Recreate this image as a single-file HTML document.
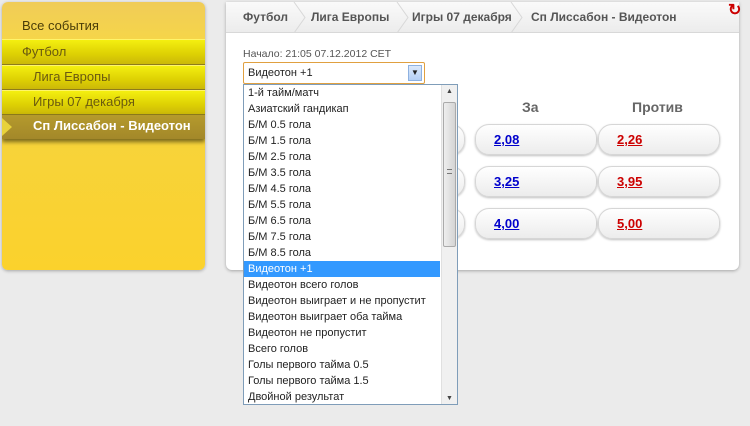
<!DOCTYPE html>
<html><head><meta charset="utf-8"><style>
*{margin:0;padding:0;box-sizing:border-box}
body{width:750px;height:426px;overflow:hidden;background:#ebebeb;font-family:"Liberation Sans",Arial,sans-serif;position:relative}
.side{position:absolute;left:2px;top:2px;width:203px;height:268px;border-radius:6px;background:linear-gradient(#f0cc58 0,#f6d648 40px,#f7d33a 140px,#fbd22c 268px);box-shadow:0 1px 3px rgba(0,0,0,.3);overflow:hidden}
.row{position:absolute;left:0;width:203px;font-size:13px;color:#6b5a10;line-height:22px}
.y{background:linear-gradient(#f4ef10,#ddd003 60%,#cbb808);border-bottom:1px solid #8d7b1c;border-top:1px solid #fff56a}
.sel{background:linear-gradient(#b59a2c,#a3882a);color:#fff;font-weight:bold;box-shadow:0 3px 4px rgba(0,0,0,.5)}
.panel{position:absolute;left:226px;top:2px;width:513px;height:268px;background:#fff;border-radius:0 0 6px 6px;box-shadow:0 1px 3px rgba(0,0,0,.3)}
.bc{height:31px;background:linear-gradient(#fafafa,#ececec);border-bottom:1px solid #d8d8d8;font-size:12px;font-weight:bold;color:#555;line-height:31px;position:relative}
.bc span{position:absolute;top:0}
.bc svg{position:absolute;top:0}
.btn{position:absolute;width:122px;height:31px;border:1px solid #d6d6d6;border-radius:14px;background:linear-gradient(#fff,#ececec);box-shadow:0 1px 2px rgba(0,0,0,.25);font-size:13px;font-weight:bold;line-height:29px;padding-left:18px}
.b{color:#0000cc;text-decoration:underline}.r{color:#cc0000;text-decoration:underline}
.list{position:absolute;left:243px;top:84px;width:215px;height:321px;border:1px solid #7f9db9;background:#fff;font-size:11px;color:#222}
.list .it{height:16px;line-height:16px;padding-left:4px;white-space:nowrap}
.list .s{background:#3399ff;color:#fff;width:196px}
.list .sb{position:absolute;right:0;top:0;width:16px;height:319px;background:#f0f0f0;border-left:1px solid #e0e0e0}
.list .th{position:absolute;left:1px;top:17px;width:13px;height:145px;background:linear-gradient(90deg,#eee,#d4d4d4);border:1px solid #aaa;border-radius:2px}
</style></head><body>
<div class="side">
<div class="row" style="top:13px;padding-left:20px;color:#4a3d08">Все события</div>
<div class="row y" style="top:37px;height:26px;padding-left:20px;line-height:24px">Футбол</div>
<div class="row y" style="top:63px;height:25px;padding-left:31px">Лига Европы</div>
<div class="row y" style="top:88px;height:25px;padding-left:31px">Игры 07 декабря</div>
<div class="row sel" style="top:113px;height:24px;padding-left:31px">Сп Лиссабон - Видеотон</div>
<div style="position:absolute;left:0;top:116px;border-left:10px solid #e8d23a;border-top:9px solid transparent;border-bottom:9px solid transparent"></div>
</div>
<div class="panel">
<div class="bc"><span style="left:17px">Футбол</span>
<svg style="left:67px" width="14" height="31"><path d="M1 0 L12 15.5 L1 31" fill="none" stroke="#d8d8d8"/></svg>
<span style="left:85px">Лига Европы</span>
<svg style="left:170px" width="14" height="31"><path d="M1 0 L12 15.5 L1 31" fill="none" stroke="#d8d8d8"/></svg>
<span style="left:186px">Игры 07 декабря</span>
<svg style="left:284px" width="14" height="31"><path d="M1 0 L12 15.5 L1 31" fill="none" stroke="#d8d8d8"/></svg>
<span style="left:305px">Сп Лиссабон - Видеотон</span></div>
<div style="position:absolute;left:17px;top:46px;font-size:10.5px;color:#555">Начало: 21:05 07.12.2012 CET</div>
<div style="position:absolute;left:17px;top:60px;width:182px;height:22px;border:1px solid #e0a040;border-radius:2px;font-size:11px;line-height:20px;padding-left:4px;color:#222">Видеотон +1<div style="position:absolute;right:2px;top:2px;width:14px;height:16px;background:linear-gradient(#dbe9fb,#b5d0f5);border:1px solid #8eb1e0;font-size:8px;line-height:14px;text-align:center">▼</div></div>
<div style="position:absolute;left:296px;top:97px;font-size:14px;font-weight:bold;color:#666">За</div>
<div style="position:absolute;left:406px;top:97px;font-size:14px;font-weight:bold;color:#666">Против</div>
<div class="btn" style="left:249px;top:122px"><span class="b">2,08</span></div>
<div class="btn" style="left:372px;top:122px"><span class="r">2,26</span></div>
<div class="btn" style="left:249px;top:164px"><span class="b">3,25</span></div>
<div class="btn" style="left:372px;top:164px"><span class="r">3,95</span></div>
<div class="btn" style="left:249px;top:206px"><span class="b">4,00</span></div>
<div class="btn" style="left:372px;top:206px"><span class="r">5,00</span></div>
<div class="btn" style="left:117px;top:122px"></div>
<div class="btn" style="left:117px;top:164px"></div>
<div class="btn" style="left:117px;top:206px"></div>
</div>
<div style="position:absolute;left:728px;top:0;color:#c00;font-size:16px;font-weight:bold">↻</div>
<div class="list">
<div class="it">1-й тайм/матч</div><div class="it">Азиатский гандикап</div><div class="it">Б/М 0.5 гола</div><div class="it">Б/М 1.5 гола</div><div class="it">Б/М 2.5 гола</div><div class="it">Б/М 3.5 гола</div><div class="it">Б/М 4.5 гола</div><div class="it">Б/М 5.5 гола</div><div class="it">Б/М 6.5 гола</div><div class="it">Б/М 7.5 гола</div><div class="it">Б/М 8.5 гола</div><div class="it s">Видеотон +1</div><div class="it">Видеотон всего голов</div><div class="it">Видеотон выиграет и не пропустит</div><div class="it">Видеотон выиграет оба тайма</div><div class="it">Видеотон не пропустит</div><div class="it">Всего голов</div><div class="it">Голы первого тайма 0.5</div><div class="it">Голы первого тайма 1.5</div><div class="it">Двойной результат</div>
<div class="sb"><div style="font-size:7px;text-align:center;color:#444;line-height:14px">▲</div><div class="th"><div style="position:absolute;left:3px;top:66px;width:5px;height:5px;border-top:1px solid #777;border-bottom:1px solid #777"></div></div><div style="position:absolute;bottom:2px;width:15px;font-size:7px;text-align:center;color:#444">▼</div></div>
</div>
</body></html>
